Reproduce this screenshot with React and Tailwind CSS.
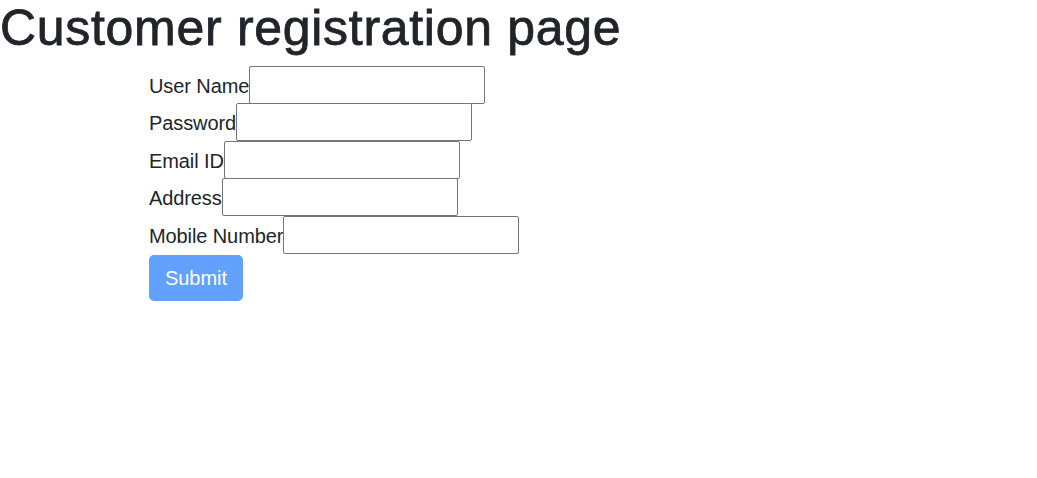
import React from 'react';

const fields = ['User Name', 'Password', 'Email ID', 'Address', 'Mobile Number'];

export default function App() {
  return (
    <div className="min-h-screen bg-white text-[#212529]" style={{ fontFamily: '"Liberation Sans", Arial, sans-serif' }}>
      <h1 className="text-[50px] leading-[56px] font-medium mb-[10px] tracking-[0.7px] [-webkit-text-stroke:0.8px_#212529]">Customer registration page</h1>
      <form className="pl-[149px] flex flex-col" onSubmit={(e) => e.preventDefault()}>
        {fields.map((f) => (
          <div key={f} className="flex items-center h-[37.5px]">
            <label className="text-[20px] leading-[30px] pt-[2px] tracking-[-0.1px]">{f}</label>
            <input
              type={f === 'Password' ? 'password' : 'text'}
              className="w-[236px] h-[38px] border border-[#767676] rounded-[2px] bg-white px-[3px] text-[16px] outline-none"
            />
          </div>
        ))}
        <div className="mt-[1px]">
          <button
            type="submit"
            className="h-[46px] w-[94px] rounded-[5px] bg-[#62a1fe] text-white text-[20px] leading-[30px]"
          >
            Submit
          </button>
        </div>
      </form>
    </div>
  );
}
